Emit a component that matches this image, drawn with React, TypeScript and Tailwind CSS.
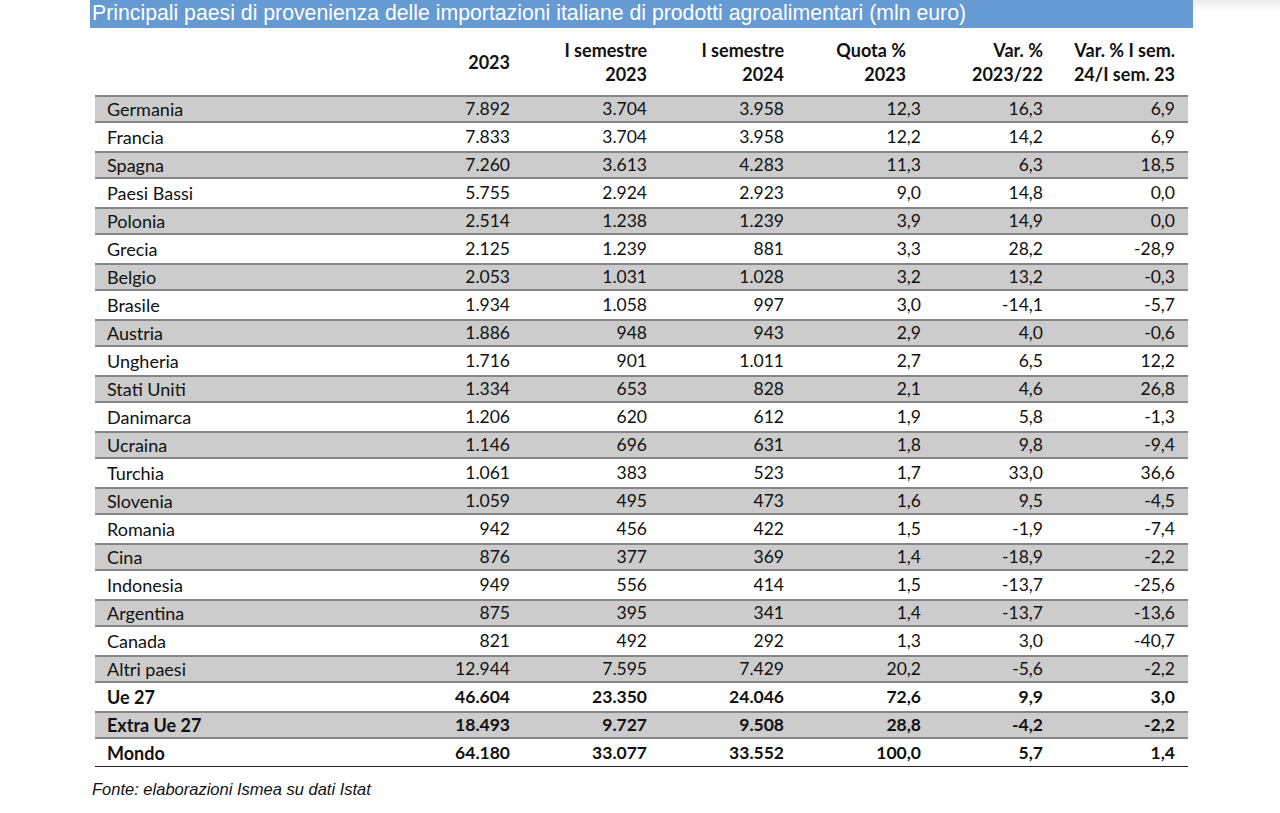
import React from 'react';

type Row = { name: string; v: string[]; bold?: boolean };

const rows: Row[] = [
  { name: 'Germania', v: ['7.892', '3.704', '3.958', '12,3', '16,3', '6,9'] },
  { name: 'Francia', v: ['7.833', '3.704', '3.958', '12,2', '14,2', '6,9'] },
  { name: 'Spagna', v: ['7.260', '3.613', '4.283', '11,3', '6,3', '18,5'] },
  { name: 'Paesi Bassi', v: ['5.755', '2.924', '2.923', '9,0', '14,8', '0,0'] },
  { name: 'Polonia', v: ['2.514', '1.238', '1.239', '3,9', '14,9', '0,0'] },
  { name: 'Grecia', v: ['2.125', '1.239', '881', '3,3', '28,2', '-28,9'] },
  { name: 'Belgio', v: ['2.053', '1.031', '1.028', '3,2', '13,2', '-0,3'] },
  { name: 'Brasile', v: ['1.934', '1.058', '997', '3,0', '-14,1', '-5,7'] },
  { name: 'Austria', v: ['1.886', '948', '943', '2,9', '4,0', '-0,6'] },
  { name: 'Ungheria', v: ['1.716', '901', '1.011', '2,7', '6,5', '12,2'] },
  { name: 'Stati Uniti', v: ['1.334', '653', '828', '2,1', '4,6', '26,8'] },
  { name: 'Danimarca', v: ['1.206', '620', '612', '1,9', '5,8', '-1,3'] },
  { name: 'Ucraina', v: ['1.146', '696', '631', '1,8', '9,8', '-9,4'] },
  { name: 'Turchia', v: ['1.061', '383', '523', '1,7', '33,0', '36,6'] },
  { name: 'Slovenia', v: ['1.059', '495', '473', '1,6', '9,5', '-4,5'] },
  { name: 'Romania', v: ['942', '456', '422', '1,5', '-1,9', '-7,4'] },
  { name: 'Cina', v: ['876', '377', '369', '1,4', '-18,9', '-2,2'] },
  { name: 'Indonesia', v: ['949', '556', '414', '1,5', '-13,7', '-25,6'] },
  { name: 'Argentina', v: ['875', '395', '341', '1,4', '-13,7', '-13,6'] },
  { name: 'Canada', v: ['821', '492', '292', '1,3', '3,0', '-40,7'] },
  { name: 'Altri paesi', v: ['12.944', '7.595', '7.429', '20,2', '-5,6', '-2,2'] },
  { name: 'Ue 27', v: ['46.604', '23.350', '24.046', '72,6', '9,9', '3,0'], bold: true },
  { name: 'Extra Ue 27', v: ['18.493', '9.727', '9.508', '28,8', '-4,2', '-2,2'], bold: true },
  { name: 'Mondo', v: ['64.180', '33.077', '33.552', '100,0', '5,7', '1,4'], bold: true },
];

const cols = 'grid grid-cols-[278px_137px_137px_137px_137px_122px_132px] pr-[13px]';

export default function App() {
  return (
    <div className="w-[1280px] h-[813px] bg-white relative overflow-hidden">
      <div className="absolute top-0 left-[1193px] right-0 h-[12px] bg-gradient-to-b from-[#ececec] to-white" />
      <div className="ml-[90px] w-[1103px]">
        {/* Title */}
        <div className="h-[28px] bg-[#659ad2] pl-[2px] pt-[1px] text-white text-[21.25px] leading-[25px] font-['Liberation_Sans',Arial,sans-serif] whitespace-nowrap">
          Principali paesi di provenienza delle importazioni italiane di prodotti agroalimentari (mln euro)
        </div>

        <div className="ml-[5px] w-[1093px] font-['Lato','Open_Sans',sans-serif] text-[18px] text-[#111]">
          {/* Header */}
          <div className={`${cols} h-[67px] font-bold items-center leading-[24px] pt-[1px]`}>
            <div />
            <div className="text-right">2023</div>
            <div className="text-right">I semestre<br />2023</div>
            <div className="text-right">I semestre<br />2024</div>
            <div className="text-right pr-[15px]">Quota %<br />2023</div>
            <div className="text-right">Var. %<br />2023/22</div>
            <div className="text-right">Var. % I sem.<br />24/I sem. 23</div>
          </div>

          {/* Body */}
          {rows.map((r, i) => {
            const shaded = i % 2 === 0;
            const last = i === rows.length - 1;
            return (
              <div
                key={r.name}
                className={`${cols} h-[28px] items-center leading-[22px] ${r.bold ? 'font-bold' : ''} ${
                  shaded ? 'bg-[#cccccc] border-y-2 border-[#858585]' : ''
                } ${last ? 'border-b border-[#222]' : ''}`}
              >
                <div className="pl-[12px]">{r.name}</div>
                {r.v.map((x, j) => (
                  <div key={j} className="text-right text-[17.5px]">{x}</div>
                ))}
              </div>
            );
          })}
        </div>

        <div className="mt-[10px] ml-[2px] italic text-[16.5px] text-[#111] font-['Liberation_Sans',Arial,sans-serif]">
          Fonte: elaborazioni Ismea su dati Istat
        </div>
      </div>
    </div>
  );
}
